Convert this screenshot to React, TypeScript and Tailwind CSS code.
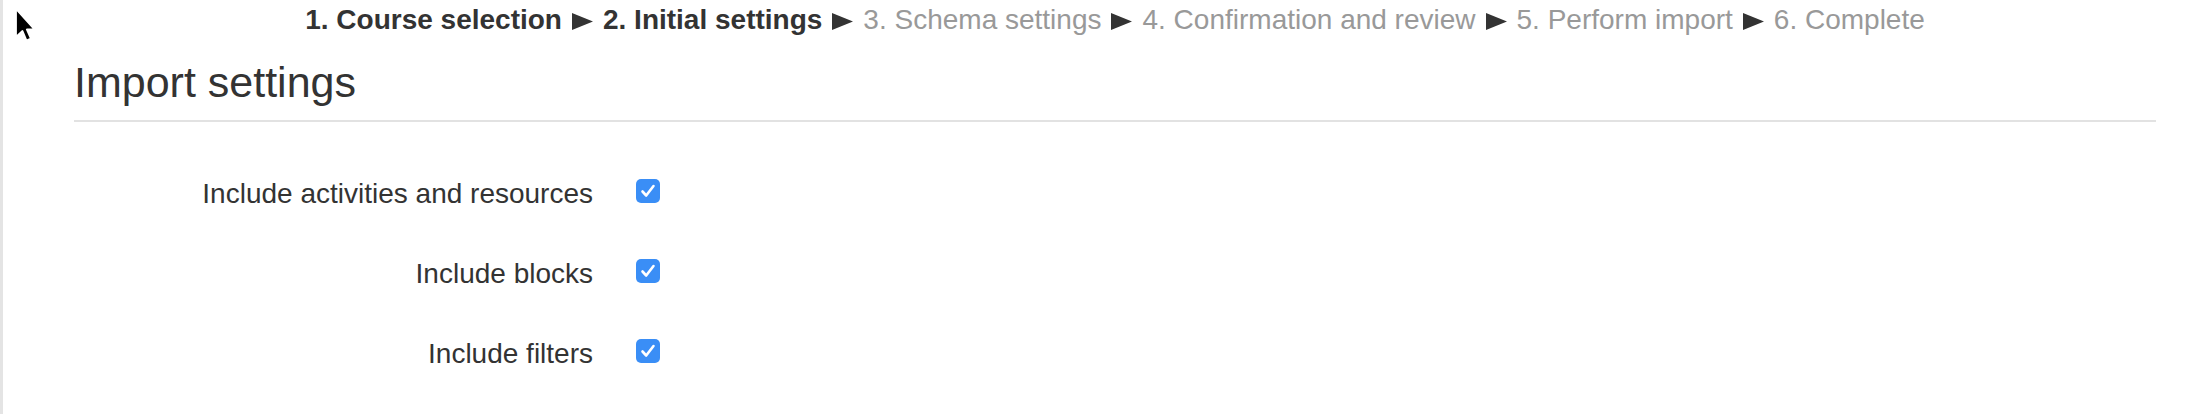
import React from "react";

const Tri = () => (
  <svg width="21" height="17" viewBox="0 0 21 17" className="inline-block mx-[10px] align-[-1px]">
    <polygon points="0,0 21,8.5 0,17" fill="#333333" />
  </svg>
);

const Check = () => (
  <div className="w-[24px] h-[24px] rounded-[5px] bg-[#3a8ef6]">
    <svg width="24" height="24" viewBox="0 0 24 24">
      <path d="M6.5 12.5 L10.2 16.5 L17.5 7" stroke="#ffffff" strokeWidth="2.6" fill="none" strokeLinecap="round" strokeLinejoin="round" />
    </svg>
  </div>
);

const rows = ["Include activities and resources", "Include blocks", "Include filters"];

export default function App() {
  return (
    <div
      className="relative w-full h-[414px] bg-white border-l-[3px] border-[#e4e4e4] overflow-hidden"
      style={{ fontFamily: '"Liberation Sans", Arial, Helvetica, sans-serif' }}
    >
      <svg className="absolute left-[10px] top-[6px]" width="26" height="38" viewBox="0 0 26 38">
        <path d="M3 3 L3 31 L9.5 25 L13.5 34.5 L17.8 32.5 L13.8 23.5 L21.5 23.5 Z" fill="#000" stroke="#fff" strokeWidth="1.8" strokeLinejoin="round" />
      </svg>
      <div className="pl-[71px] pr-[38px]">
        <div className="pt-[4px] text-center text-[28px] leading-[31px] text-[#999999] whitespace-nowrap">
          <span className="font-bold text-[#333333]">1. Course selection</span>
          <Tri />
          <span className="font-bold text-[#333333]">2. Initial settings</span>
          <Tri />
          <span>3. Schema settings</span>
          <Tri />
          <span>4. Confirmation and review</span>
          <Tri />
          <span>5. Perform import</span>
          <Tri />
          <span>6. Complete</span>
        </div>
        <h2 className="mt-[21px] pb-[12px] text-[43px] leading-[52px] font-normal text-[#333333] border-b-2 border-[#e2e2e2]">
          Import settings
        </h2>
        <div className="pt-[29px]">
          {rows.map((r) => (
            <div key={r} className="flex items-center h-[80px]">
              <div className="w-[519px] text-right text-[28px] leading-[32px] text-[#333333] pt-[6px]">{r}</div>
              <div className="ml-[43px]">
                <Check />
              </div>
            </div>
          ))}
        </div>
      </div>
    </div>
  );
}
